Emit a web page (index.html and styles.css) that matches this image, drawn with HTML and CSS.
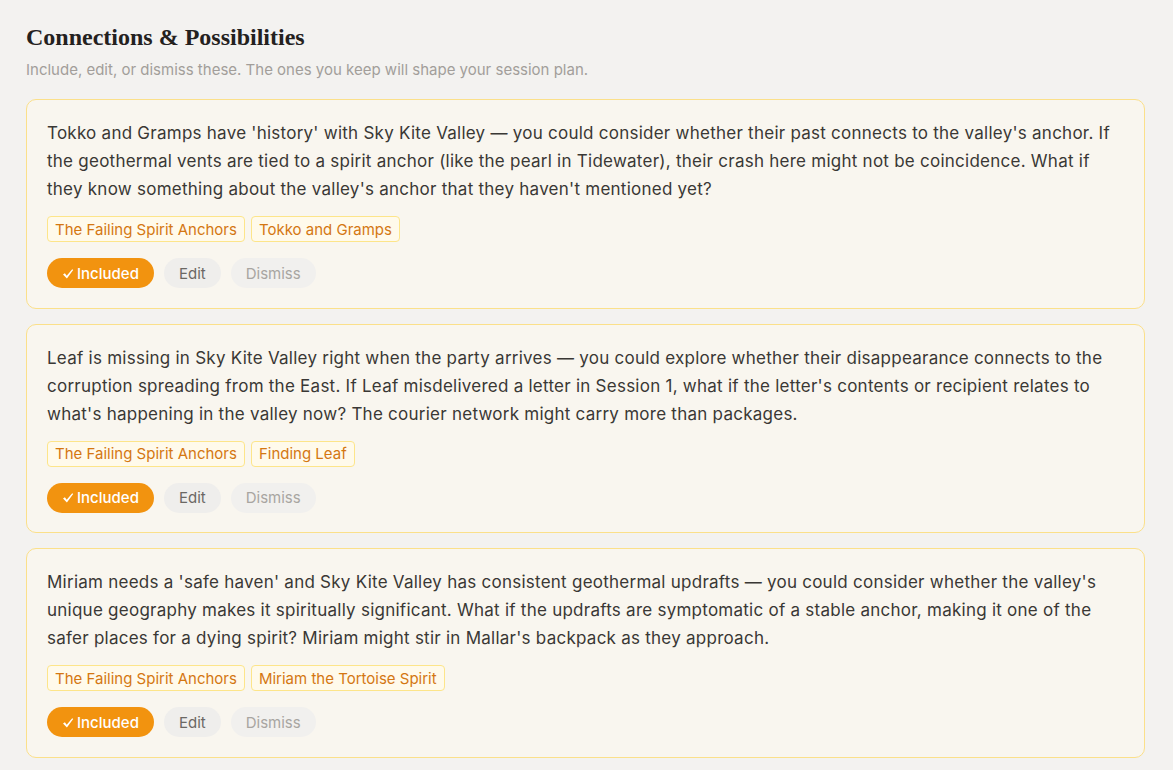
FILE: index.html
```html
<!DOCTYPE html>
<html lang="en">
<head>
<meta charset="utf-8">
<title>Connections &amp; Possibilities</title>
<link rel="stylesheet" href="styles.css">
</head>
<body>
<main class="page">
  <h1 class="title">Connections &amp; Possibilities</h1>
  <p class="subtitle">Include, edit, or dismiss these. The ones you keep will shape your session plan.</p>

  <section class="list">
    <article class="card">
      <p class="card-text">Tokko and Gramps have 'history' with Sky Kite Valley — you could consider whether their past connects to the valley's anchor. If the geothermal vents are tied to a spirit anchor (like the pearl in Tidewater), their crash here might not be coincidence. What if they know something about the valley's anchor that they haven't mentioned yet?</p>
      <div class="tags">
        <span class="tag">The Failing Spirit Anchors</span>
        <span class="tag">Tokko and Gramps</span>
      </div>
      <div class="actions">
        <button class="btn btn-included"><svg class="check" viewBox="0 0 12 12" width="12" height="12" aria-hidden="true"><path d="M1 6.6 L2.9 5.2 L4.7 7.7 L10.2 1.2 L11.2 2 L4.9 10.6 Z" fill="#fff"/></svg>Included</button>
        <button class="btn btn-edit">Edit</button>
        <button class="btn btn-dismiss">Dismiss</button>
      </div>
    </article>

    <article class="card">
      <p class="card-text">Leaf is missing in Sky Kite Valley right when the party arrives — you could explore whether their disappearance connects to the corruption spreading from the East. If Leaf misdelivered a letter in Session 1, what if the letter's contents or recipient relates to what's happening in the valley now? The courier network might carry more than packages.</p>
      <div class="tags">
        <span class="tag">The Failing Spirit Anchors</span>
        <span class="tag">Finding Leaf</span>
      </div>
      <div class="actions">
        <button class="btn btn-included"><svg class="check" viewBox="0 0 12 12" width="12" height="12" aria-hidden="true"><path d="M1 6.6 L2.9 5.2 L4.7 7.7 L10.2 1.2 L11.2 2 L4.9 10.6 Z" fill="#fff"/></svg>Included</button>
        <button class="btn btn-edit">Edit</button>
        <button class="btn btn-dismiss">Dismiss</button>
      </div>
    </article>

    <article class="card">
      <p class="card-text">Miriam needs a 'safe haven' and Sky Kite Valley has consistent geothermal updrafts — you could consider whether the valley's unique geography makes it spiritually significant. What if the updrafts are symptomatic of a stable anchor, making it one of the safer places for a dying spirit? Miriam might stir in Mallar's backpack as they approach.</p>
      <div class="tags">
        <span class="tag">The Failing Spirit Anchors</span>
        <span class="tag">Miriam the Tortoise Spirit</span>
      </div>
      <div class="actions">
        <button class="btn btn-included"><svg class="check" viewBox="0 0 12 12" width="12" height="12" aria-hidden="true"><path d="M1 6.6 L2.9 5.2 L4.7 7.7 L10.2 1.2 L11.2 2 L4.9 10.6 Z" fill="#fff"/></svg>Included</button>
        <button class="btn btn-edit">Edit</button>
        <button class="btn btn-dismiss">Dismiss</button>
      </div>
    </article>
  </section>
</main>
</body>
</html>
```
FILE: styles.css
```css
* { box-sizing: border-box; }

html, body {
  margin: 0;
  padding: 0;
  background: #f3f2f0;
}

body {
  font-family: Inter, "Noto Sans", "Liberation Sans", sans-serif;
  color: #3a3835;
}

.page {
  padding: 22px 28px 20px 26px;
}

.title {
  margin: 0;
  font-family: "Liberation Serif", "DejaVu Serif", serif;
  font-weight: 700;
  font-size: 24px;
  line-height: 30px;
  color: #24211e;
}

.subtitle {
  margin: 8px 0 0;
  font-size: 15px;
  line-height: 20px;
  color: #a29e9a;
}

.list {
  margin-top: 19px;
  display: flex;
  flex-direction: column;
  gap: 15px;
}

.card {
  background: #f9f6ef;
  border: 1px solid #fbe08a;
  border-radius: 10px;
  padding: 19px 20px 19.5px;
}

.card-text {
  margin: 0;
  font-size: 17px;
  line-height: 28px;
  letter-spacing: 0.25px;
  color: #3a3835;
}

.tags {
  margin-top: 13px;
  display: flex;
  flex-wrap: wrap;
  gap: 6px;
}

.tag {
  display: inline-flex;
  align-items: center;
  height: 26px;
  padding: 0 7px;
  font-size: 15px;
  color: #d47712;
  background: #fffaeb;
  border: 1px solid #fde58a;
  border-radius: 4px;
}

.actions {
  margin-top: 16px;
  display: flex;
  gap: 10px;
}

.btn {
  height: 30px;
  border: none;
  border-radius: 15px;
  font-family: Inter, "Noto Sans", "Liberation Sans", sans-serif;
  font-size: 15px;
  padding: 0 15px;
  cursor: pointer;
  display: inline-flex;
  align-items: center;
}

.btn-included {
  background: #f2930f;
  color: #ffffff;
  font-weight: 500;
}

.check {
  display: block;
  margin-right: 3px;
  margin-top: 1px;
}

.btn-edit {
  background: #efeeec;
  color: #6b6864;
}

.btn-dismiss {
  background: #f1f0ee;
  color: #a8a5a1;
}
```
